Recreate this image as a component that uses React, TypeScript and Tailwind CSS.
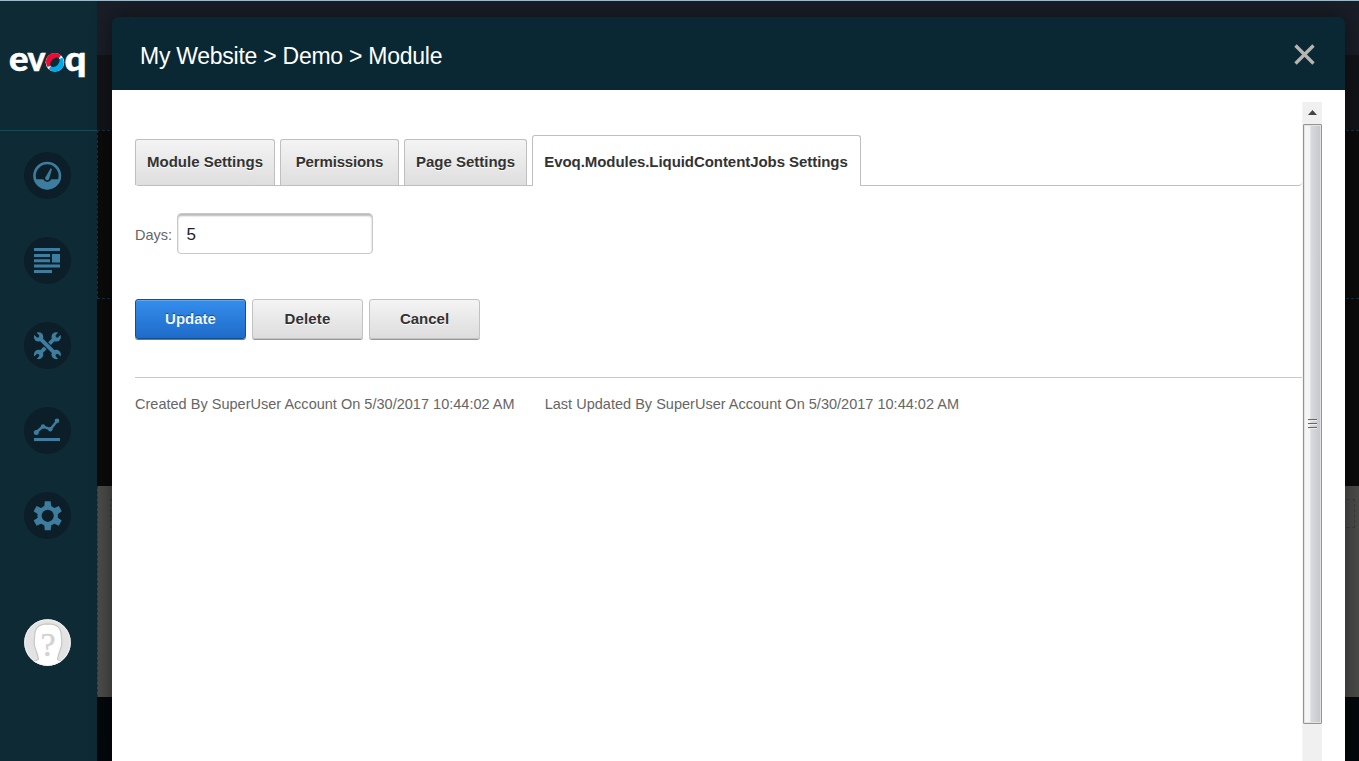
import React from "react";

const ARIAL = "font-['Liberation_Sans',Arial,sans-serif]";

function Logo() {
  return (
    <svg width="97" height="80" viewBox="0 25 97 80" className="block" aria-label="evoq">
      <g fill="#fff" stroke="#fff" strokeWidth="0.5" fontFamily="Lato, sans-serif" fontWeight="900" fontSize="34.500">
        <text x="9" y="71" textLength="19.500" lengthAdjust="spacingAndGlyphs">e</text>
        <text x="27.500" y="71" textLength="18" lengthAdjust="spacingAndGlyphs">v</text>
        <text x="64.500" y="71" textLength="22" lengthAdjust="spacingAndGlyphs">q</text>
      </g>
      <circle cx="54.900" cy="62.300" r="9.300" fill="#fff" />
      <path d="M47 66.500C43.800 59 48.500 53 55 53C57.500 53 59.500 53.800 61 55.500L56 62L50 66Q48.500 67 47 66.500Z" fill="#ed0a34" />
      <path d="M62.800 58.200C66 65 61.500 71.600 55 71.600C52.500 71.600 50 70.500 48.700 69L54 62L60 58.500Q61.500 57.600 62.800 58.200Z" fill="#00a9e8" />
      <ellipse cx="54.900" cy="62.300" rx="5.600" ry="3.700" transform="rotate(-45 54.900 62.300)" fill="#0e2a35" />
    </svg>
  );
}

const Gauge = () => (
  <svg viewBox="0 0 47 47" className="size-[47px]">
    <circle cx="23.200" cy="23.700" r="12.700" fill="none" stroke="#3d7ea0" strokeWidth="2.600" />
    <path d="M10 27.200H19.300A4.300 4.300 0 0 0 27.300 27.200H36.500A13.800 13.800 0 0 1 10 27.200Z" fill="#3d7ea0" />
    <path d="M26.600 16.300L28 16.900L25.300 26.200A2.100 2.100 0 1 1 21.900 24.500Z" fill="#3d7ea0" />
  </svg>
);

const Content = () => (
  <svg viewBox="0 0 47 47" className="size-[47px]" fill="#3d7ea0">
    <path d="M10 11h26v3H10zM10 17h16v3H10zM10 22.300h16v3H10zM28 17h8v8.500h-8zM10 27.600h26v3H10zM10 33h18v3H10z" />
  </svg>
);

const Tools = () => (
  <svg viewBox="0 0 47 47" className="size-[47px]">
    <g fill="#3d7ea0">
      <circle cx="14.600" cy="14.900" r="4.700" />
      <circle cx="32.200" cy="14.900" r="4.700" />
      <circle cx="14.600" cy="32.500" r="4.700" />
      <circle cx="32.200" cy="32.500" r="4.700" />
    </g>
    <g stroke="#0c1e27" strokeWidth="3.300" strokeLinecap="round">
      <path d="M8.500 8.800L13.600 13.900M38.300 8.800L33.200 13.900M8.500 38.600L13.600 33.500M38.300 38.600L33.200 33.500" />
    </g>
    <path d="M30 17.100L17 30.100" stroke="#3d7ea0" strokeWidth="3.700" />
    <path d="M19 19.300L28 28.300" stroke="#0c1e27" strokeWidth="6" />
    <path d="M16.800 17.100L30 30.300" stroke="#3d7ea0" strokeWidth="3.900" />
  </svg>
);

const Chart = () => (
  <svg viewBox="0 0 47 47" className="size-[47px]" fill="#3d7ea0">
    <path d="M12 25.500L19 19.500L26.500 22.300L33 14" fill="none" stroke="#3d7ea0" strokeWidth="2.500" />
    <circle cx="12.300" cy="25.500" r="2.500" />
    <circle cx="19" cy="19.500" r="2.200" />
    <circle cx="26.300" cy="22.200" r="2.200" />
    <circle cx="33" cy="13.800" r="2.300" />
    <path d="M10 31h26v3H10z" />
  </svg>
);

const Gear = () => (
  <svg viewBox="0 0 47 47" className="size-[47px]">
    <g fill="#3d7ea0">
      {[0, 60, 120].map((a) => (
        <path key={a} d="M20.800 9.300H26.700L27.200 14V33.500L26.700 38.300H20.800L20.300 33.500V14Z" transform={`rotate(${a} 23.700 23.800)`} />
      ))}
      <circle cx="23.700" cy="23.800" r="10.300" />
    </g>
    <circle cx="23.700" cy="23.800" r="6.100" fill="#0c1e27" />
  </svg>
);

const Avatar = () => (
  <svg viewBox="0 0 47 47" className="mt-[80px] size-[47px]">
    <defs>
      <clipPath id="disc"><circle cx="23.500" cy="23.500" r="23.300" /></clipPath>
    </defs>
    <g clipPath="url(#disc)">
      <rect width="47" height="47" fill="#e3e3e3" />
      <path d="M7 42Q14 42 14.500 40Q13.500 35 11.500 30Q9.500 25 10.500 19C10.500 8 15 5 24 4.800C33 5 37.500 8 37.500 19Q38.500 25 36.500 30Q34.500 35 33.500 40Q34 42 41 42V50H7Z" fill="#fff" stroke="#c6c6c6" strokeWidth="1.200" />
      <text x="24" y="37" textAnchor="middle" fontFamily="Liberation Serif, serif" fontSize="34" fill="#d2d2d2" stroke="#d2d2d2" strokeWidth=".4">?</text>
    </g>
    <circle cx="23.500" cy="23.500" r="22.800" fill="none" stroke="#f3f3f3" />
  </svg>
);

function Sidebar() {
  return (
    <nav className="flex w-[97px] shrink-0 flex-col bg-[#0e2a35]">
      <div className="h-[130px] border-b border-[#1b475a] pt-[24px]">
        <Logo />
      </div>
      <div className="flex flex-col items-center gap-[38px] pt-[21px] pr-[3px]">
        {[Gauge, Content, Tools, Chart, Gear].map((Icon, i) => (
          <button key={i} className="block size-[47px] rounded-full bg-[#0c1e27]">
            <Icon />
          </button>
        ))}
      </div>
      <div className="flex justify-center pr-[3px]">
        <Avatar />
      </div>
    </nav>
  );
}

function Backdrop() {
  return (
    <div className="flex grow flex-col">
      <div className="h-[54px] bg-[#191e27]" />
      <div className="h-[75px] bg-[#131418]" />
      <div className="h-[169px] border border-r-0 border-dashed border-[#17323c] bg-[#0b0b0b]" />
      <div className="h-[187px] bg-[#0b0b0b]" />
      <div className="flex h-[211px] justify-between border-l border-dashed border-[#343432] bg-[#4c4c4a] pt-[13px]">
        <div className="ml-[12px] h-[29px] w-[30px] border border-dashed border-[#3c3c3a]" />
        <div className="mr-[4px] h-[29px] w-[30px] border border-dashed border-[#3c3c3a]" />
      </div>
      <div className="grow bg-[#03080c]" />
    </div>
  );
}

const tabs = [
  { label: "Module Settings", box: "w-[140px]", text: "tracking-[0.01px]" },
  { label: "Permissions", box: "w-[119px]", text: "tracking-[-0.15px]" },
  { label: "Page Settings", box: "w-[123px]", text: "tracking-[0px]" },
];

function Tabs() {
  return (
    <div className="flex h-[51px] items-end rounded-b-[4px] border-b border-[#bfbfbf] text-[15px] font-bold text-[#333]">
      {tabs.map((t) => (
        <button
          key={t.label}
          className={`mr-[5px] h-[46px] rounded-t-[3px] border border-b-0 border-[#bfbfbf] bg-linear-to-b from-[#f4f4f4] to-[#dedede] whitespace-nowrap [text-shadow:0_1px_0_#fff] ${t.box} ${t.text}`}
        >
          {t.label}
        </button>
      ))}
      <button className="relative -bottom-px h-[51px] w-[329px] rounded-t-[3px] border border-b-0 border-[#bfbfbf] bg-white pt-[2px] pr-px tracking-[-0.06px] whitespace-nowrap">
        Evoq.Modules.LiquidContentJobs Settings
      </button>
    </div>
  );
}

const actions = [
  { label: "Update", look: "border-[#0f5096] bg-linear-to-b from-[#358eec] to-[#1f6bc9] text-[#eef5fc] [text-shadow:0_-1px_1px_#124a88] shadow-[0_1px_0_#777,inset_0_1px_0_#65aaf0]" },
  { label: "Delete", look: "border-[#c2c2c2] bg-linear-to-b from-[#f4f4f4] to-[#dddddd] text-[#333] [text-shadow:0_1px_0_#fff] tracking-[0.15px] shadow-[0_1px_0_#969696]" },
  { label: "Cancel", look: "border-[#c2c2c2] bg-linear-to-b from-[#f4f4f4] to-[#dddddd] text-[#333] [text-shadow:0_1px_0_#fff] shadow-[0_1px_0_#969696]" },
];

function Scrollbar() {
  return (
    <div className="flex w-[20px] shrink-0 flex-col border-l border-[#f4f4f4] bg-[#f0f0f0]">
      <div className="flex h-[22px] items-center justify-center pb-[2px]">
        <svg width="9" height="5" viewBox="0 0 9 5"><path d="M4.500 0L9 5H0Z" fill="#444" /></svg>
      </div>
      <div className="flex h-[600px] flex-col items-center justify-center gap-[2px] rounded-[1px] border border-[#949494] bg-linear-to-r from-[#f5f5f5] from-35% via-[#d9dadc] via-40% to-[#c6c7cd] pr-px shadow-[inset_0_0_0_1px_#e3e3e5]">
        <div className="h-[2px] w-[9px] border-t border-[#666] bg-[#eee]" />
        <div className="h-[2px] w-[9px] border-t border-[#666] bg-[#eee]" />
        <div className="h-[2px] w-[9px] border-t border-[#666] bg-[#eee]" />
      </div>
    </div>
  );
}

function Modal() {
  return (
    <section className="absolute top-[17px] left-[112px] flex h-[744px] w-[1233px] flex-col rounded-t-[7px] shadow-[0_0_20px_rgba(0,0,0,0.5)]">
      <header className="flex h-[73px] shrink-0 items-center justify-between rounded-t-[7px] bg-[#092834] pr-[30px] pb-px pl-[28px]">
        <h1 className="pt-[6px] text-[23px] tracking-[-0.26px] whitespace-nowrap text-white">My Website &gt; Demo &gt; Module</h1>
        <svg width="21" height="21" viewBox="0 0 21 21" className="mt-[3px]">
          <path d="M1.500 1.500L19.500 19.500M19.500 1.500L1.500 19.500" stroke="#b5b5b2" strokeWidth="3.300" />
        </svg>
      </header>
      <div className="flex grow bg-white pt-[12px] pr-[23px]">
        <main className="w-[1190px] shrink-0 pt-[33px] pl-[23px]">
          <Tabs />
          <div className="mt-[27px] flex items-center">
            <label htmlFor="days" className="w-[42px] pt-[4px] text-[14.500px] text-[#666]">Days:</label>
            <input
              id="days"
              defaultValue="5"
              className="h-[41px] w-[196px] rounded-[4px] border border-[#c9c9c9] bg-white px-[8.500px] pt-[2px] text-[17px] text-[#222] shadow-[inset_0_2px_2px_#b8b8b8] outline-none"
            />
          </div>
          <div className="mt-[45px] flex gap-[6px]">
            {actions.map((a) => (
              <button key={a.label} className={`h-[40px] w-[111px] rounded-[3px] border text-[15px] font-bold ${a.look}`}>
                {a.label}
              </button>
            ))}
          </div>
          <div className="mt-[38px] flex gap-[30px] border-t border-[#c9c9c9] pt-[16px] text-[14.500px] leading-[20px] tracking-[0.015px] whitespace-nowrap text-[#666]">
            <span>Created By SuperUser Account On 5/30/2017 10:44:02 AM</span>
            <span>Last Updated By SuperUser Account On 5/30/2017 10:44:02 AM</span>
          </div>
        </main>
        <Scrollbar />
      </div>
    </section>
  );
}

export default function App() {
  return (
    <div className={`relative flex h-[761px] w-[1359px] overflow-hidden border-t border-[#9db9ca] bg-[#0e2a35] ${ARIAL}`}>
      <Sidebar />
      <Backdrop />
      <div className="absolute -top-px left-0">
        <Modal />
      </div>
    </div>
  );
}
